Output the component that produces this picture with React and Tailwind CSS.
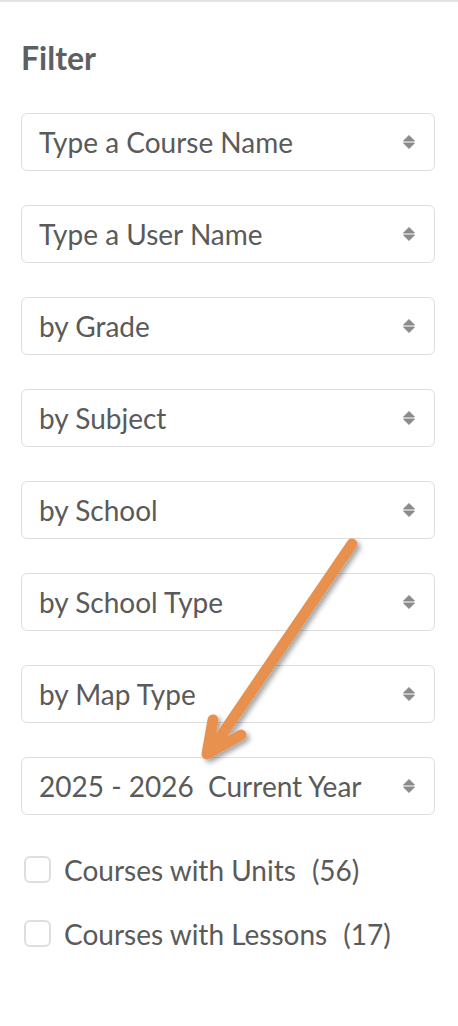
import React from 'react';

const selects = [
  'Type a Course Name',
  'Type a User Name',
  'by Grade',
  'by Subject',
  'by School',
  'by School Type',
  'by Map Type',
  '2025 - 2026\u00a0\u00a0Current Year',
];

const Arrows = () => (
  <svg width="14" height="16" viewBox="0 0 14 16" className="shrink-0">
    <path d="M1.5 7 L7 1.5 L12.5 7 Z" fill="#8a8a8a" stroke="#8a8a8a" strokeWidth="1" strokeLinejoin="round" />
    <path d="M1.5 9 L7 14.5 L12.5 9 Z" fill="#8a8a8a" stroke="#8a8a8a" strokeWidth="1" strokeLinejoin="round" />
  </svg>
);

const Select = ({ label }) => (
  <div className="h-[58px] flex items-center justify-between pl-[17px] pr-[18px] border-[1.5px] border-[#dedede] rounded-[6px] bg-white">
    <span className="text-[28px] leading-none text-[#5a5a5a] whitespace-pre">{label}</span>
    <Arrows />
  </div>
);

const Check = ({ label, count }) => (
  <label className="h-[27px] flex items-center gap-[13px]">
    <span className="w-[27px] h-[27px] border-2 border-[#dedede] rounded-[6px] bg-white shrink-0" />
    <span className="text-[28px] leading-none text-[#5a5a5a] whitespace-pre">
      {label}
      <span className="ml-[16px]">({count})</span>
    </span>
  </label>
);

export default function App() {
  return (
    <div
      className="relative w-[458px] h-[1026px] bg-white border-t-2 border-[#e2e2e2] overflow-hidden"
      style={{ fontFamily: 'Lato, "Open Sans", sans-serif' }}
    >
      <div className="pl-[21px] pr-[23px] pt-[36px]">
        <h2 className="text-[32px] font-bold text-[#5f5f5f] leading-[40px]">Filter</h2>
        <div className="mt-[35px] flex flex-col gap-[34px]">
          {selects.map((s) => (
            <Select key={s} label={s} />
          ))}
        </div>
        <div className="mt-[41px] pl-[3px] flex flex-col gap-[37px]">
          <Check label="Courses with Units" count={56} />
          <Check label="Courses with Lessons" count={17} />
        </div>
      </div>

      <svg className="absolute left-0 top-0 pointer-events-none" width="458" height="1026">
        <defs>
          <filter id="sh" x="-20%" y="-20%" width="140%" height="140%">
            <feDropShadow dx="3" dy="3" stdDeviation="2.5" floodColor="#000" floodOpacity="0.35" />
          </filter>
        </defs>
        <g filter="url(#sh)" stroke="#e8914f" strokeWidth="11" strokeLinecap="round" strokeLinejoin="round" fill="none">
          <path d="M352 542 L210 750" />
          <path d="M213 718 L207 752 L241 733" />
        </g>
      </svg>
    </div>
  );
}
